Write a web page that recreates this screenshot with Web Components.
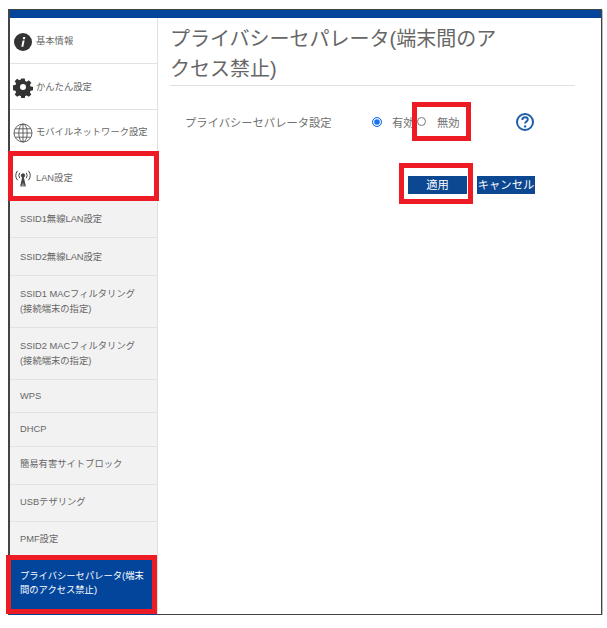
<!DOCTYPE html>
<html lang="ja">
<head>
<meta charset="utf-8">
<title>プライバシーセパレータ</title>
<style>
  html, body { margin: 0; background: #fff; }
  body { font-family: "Liberation Sans", "Noto Sans CJK JP", sans-serif; }
</style>
</head>
<body>
<template id="side-item-tpl">
  <style>
    :host {
      display: flex;
      align-items: center;
      box-sizing: border-box;
      color: #666;
      font-size: 9.3px;
      line-height: 15px;
      border-bottom: 1px solid #e2e2e2;
      background: #fff;
      padding: 2px 0 0 2px;
      gap: 2px;
    }
    :host([sub]) { background: #f2f2f2; padding: 2px 0 0 10px; }
    :host([current]) { background: #03459b; color: #fff; border-bottom: 0; padding: 0 6px 5px 10px; line-height: 14px; }
    ::slotted(svg) { flex: none; width: 22px; height: 22px; }
  </style>
  <slot name="icon"></slot>
  <span><slot></slot></span>
</template>

<template id="side-menu-tpl">
  <style>
    :host { display: block; width: 147px; flex: none; border-right: 1px solid #e0e0e0; background: #f2f2f2; }
  </style>
  <slot></slot>
</template>

<template id="setting-row-tpl">
  <style>
    :host { display: flex; align-items: center; height: 20px; margin-top: 26px; padding-left: 15px; color: #707070; font-size: 11.3px; }
    .label { width: 187px; }
    .radio { display: flex; align-items: center; width: 45px; }
    .radio.off { width: 98px; }
    .radio span { margin-left: 10px; }
    .radio.off span { margin-left: 11px; }
    i { width: 9px; height: 9px; border-radius: 50%; box-sizing: border-box; border: 1px solid #777; background: #fff; flex: none; margin-top: -1px; }
    i.on { border: 1px solid #1a73e8; background: #1a73e8; box-shadow: inset 0 0 0 1.2px #fff; width: 10px; height: 10px; }
    svg { width: 20px; height: 20px; flex: none; }
  </style>
  <div class="label">プライバシーセパレータ設定</div>
  <div class="radio"><i class="on"></i><span>有効</span></div>
  <div class="radio off"><i></i><span>無効</span></div>
  <svg viewBox="0 0 20 20" aria-label="ヘルプ">
    <circle cx="10" cy="10" r="8" fill="none" stroke="#1d5fa8" stroke-width="2"/>
    <path d="M7.3 8c0-1.7 1.2-2.7 2.8-2.7s2.7 1 2.7 2.3c0 1.9-2.7 2-2.7 4" fill="none" stroke="#1d5fa8" stroke-width="1.9"/>
    <circle cx="10.1" cy="14.4" r="1.2" fill="#1d5fa8"/>
  </svg>
</template>

<template id="app-button-tpl">
  <style>
    :host { display: block; background: #0c4792; color: #fff; font-size: 11.3px; line-height: 18px; text-align: center; box-sizing: border-box; }
  </style>
  <slot></slot>
</template>

<template id="red-mark-tpl">
  <style>
    :host { position: absolute; box-sizing: border-box; border: 5px solid #ed1c24; }
  </style>
</template>

<template id="router-page-tpl">
  <style>
    :host {
      display: flex;
      flex-direction: column;
      box-sizing: border-box;
      width: 594px;
      height: 606px;
      margin: 9px 0 0 8px;
      border: solid #444;
      border-width: 1px 1px 1px 2px;
      box-shadow: 1px 1px 0 #bbb;
      position: relative;
    }
    .bar { height: 8px; background: #03459b; flex: none; }
    .body { display: flex; flex: 1; min-height: 0; }
    main { flex: 1; padding: 6px 0 0 12px; }
    h1 { margin: 0; width: 335px; padding-bottom: 1px; font-size: 20px; line-height: 30px; font-weight: 400; color: #666; }
    hr { margin: 0; width: 405px; height: 1px; border: 0; background: #e0e0e0; }
    .actions { display: flex; margin: 44px 0 0 238px; }
    .apply { width: 59px; margin-right: 10px; height: 18px; }
    .cancel { width: 58px; height: 18px; white-space: nowrap; }
  </style>
  <div class="bar"></div>
  <div class="body">
    <slot name="menu"></slot>
    <main>
      <h1>プライバシーセパレータ(端末間のアクセス禁止)</h1>
      <hr>
      <setting-row></setting-row>
      <div class="actions">
        <app-button class="apply">適用</app-button>
        <app-button class="cancel">キャンセル</app-button>
      </div>
    </main>
  </div>
</template>

<router-page>
  <side-menu slot="menu">
    <side-item style="height:46px">
      <svg slot="icon" viewBox="0 0 22 22"><circle cx="11" cy="11" r="9" fill="#333"/><path d="M10.600 9.500h2l-1.300 6.300h-2zM11.200 6h2.100l-.4 2.200h-2.100z" fill="#fff"/></svg>
      基本情報
    </side-item>
    <side-item style="height:46px;padding-top:1px">
      <svg slot="icon" viewBox="0 0 22 22"><path d="M9.300 2.500h3.400l.5 2.500 1.500.7 2.200-1.400 2.400 2.400-1.400 2.200.7 1.500 2.400.4v3.400l-2.400.5-.7 1.500 1.400 2.200-2.400 2.400-2.200-1.400-1.500.6-.5 2.500H9.300l-.5-2.500-1.500-.6-2.200 1.400-2.400-2.400 1.400-2.200-.7-1.500-2.400-.5V9.300l2.400-.4.7-1.500-1.400-2.200 2.400-2.400 2.200 1.400 1.500-.7zM11 8a3 3 0 1 0 0 6 3 3 0 0 0 0-6z" fill="#333" fill-rule="evenodd"/></svg>
      かんたん設定
    </side-item>
    <side-item style="height:44px">
      <svg slot="icon" viewBox="0 0 22 22" fill="none" stroke="#555" stroke-width=".9"><circle cx="11" cy="11" r="9"/><ellipse cx="11" cy="11" rx="4.200" ry="9"/><path d="M11 2v18M2 11h18M3.200 6.800h15.600M3.200 15.200h15.600"/></svg>
      モバイルネットワーク設定
    </side-item>
    <side-item style="height:45px;padding-top:4px">
      <svg slot="icon" viewBox="0 0 22 22" fill="none" stroke="#444" stroke-width="1"><circle cx="11" cy="8.500" r="1.700" fill="#444"/><path d="M11 9.500v10M8.800 19.500l2.200-10 2.200 10" stroke-width="1.300"/><path d="M7.800 5.800a4.500 4.500 0 0 0 0 5.400M14.200 5.800a4.500 4.500 0 0 1 0 5.400M5.500 3.800a7.800 7.800 0 0 0 0 9.400M16.500 3.800a7.800 7.800 0 0 1 0 9.400"/></svg>
      LAN設定
    </side-item>
    <side-item sub style="height:39px">SSID1無線LAN設定</side-item>
    <side-item sub style="height:38px">SSID2無線LAN設定</side-item>
    <side-item sub style="height:52px;padding-top:0">SSID1 MACフィルタリング<br>(接続端末の指定)</side-item>
    <side-item sub style="height:52px;padding-top:0">SSID2 MACフィルタリング<br>(接続端末の指定)</side-item>
    <side-item sub style="height:33px;padding-top:0">WPS</side-item>
    <side-item sub style="height:34px;padding-top:0">DHCP</side-item>
    <side-item sub style="height:38px;padding-top:0;padding-bottom:2px">簡易有害サイトブロック</side-item>
    <side-item sub style="height:37px;padding-top:0;padding-bottom:2px">USBテザリング</side-item>
    <side-item sub style="height:34px">PMF設定</side-item>
    <side-item sub current style="height:59px">プライバシーセパレータ(端末間のアクセス禁止)</side-item>
  </side-menu>
</router-page>

<red-mark style="left:8px;top:151px;width:151px;height:50px"></red-mark>
<red-mark style="left:412px;top:102px;width:59px;height:39px"></red-mark>
<red-mark style="left:399px;top:163px;width:74px;height:41px"></red-mark>
<red-mark style="left:6px;top:555px;width:151px;height:59px"></red-mark>

<script>
function defineFromTemplate(tag, tplId) {
  customElements.define(tag, class extends HTMLElement {
    constructor() {
      super();
      this.attachShadow({mode: "open"}).appendChild(document.getElementById(tplId).content.cloneNode(true));
    }
  });
}
defineFromTemplate("side-item", "side-item-tpl");
defineFromTemplate("side-menu", "side-menu-tpl");
defineFromTemplate("setting-row", "setting-row-tpl");
defineFromTemplate("app-button", "app-button-tpl");
defineFromTemplate("red-mark", "red-mark-tpl");
defineFromTemplate("router-page", "router-page-tpl");
</script>
</body>
</html>
